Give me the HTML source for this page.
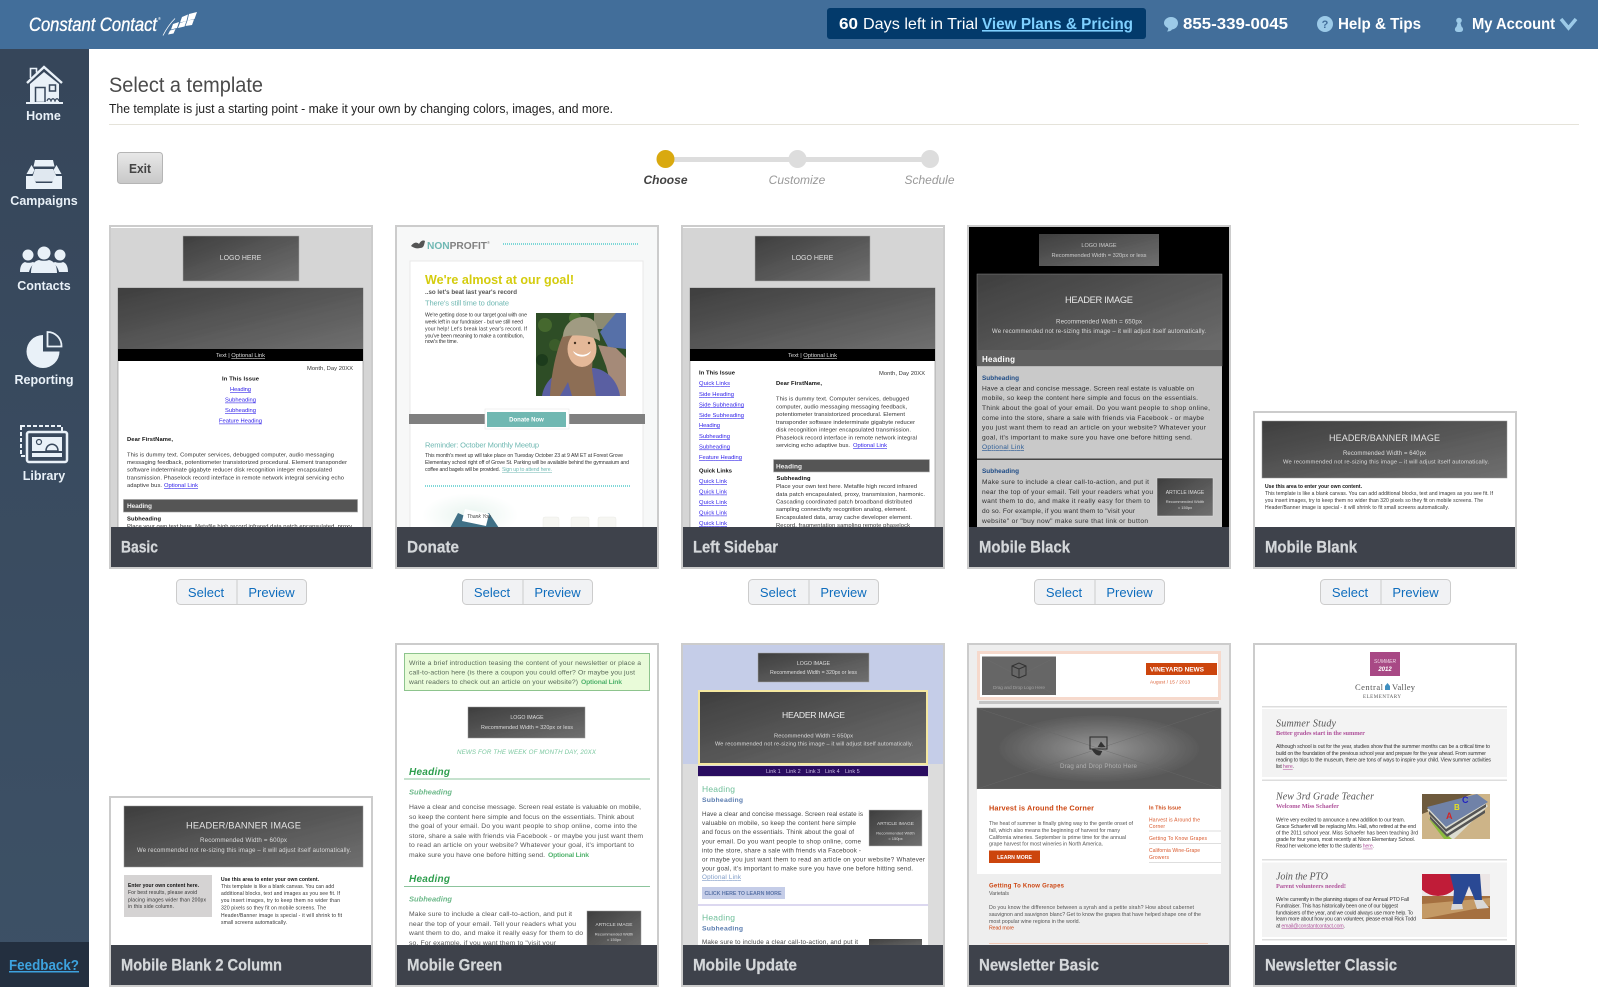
<!DOCTYPE html>
<html lang="en">
<head>
<meta charset="utf-8">
<title>Select a template</title>
<style>
html,body{margin:0;padding:0;width:1598px;height:987px;overflow:hidden;background:#fff}
svg{display:block;font-family:"Liberation Sans",Arial,sans-serif}
.nav text{font-weight:700;font-size:12.5px;fill:#e9f1f8;text-anchor:middle}
.hd text{font-size:16px;font-weight:700;fill:#fff}
.ttl text{font-size:17px;font-weight:700;fill:#d4d7da;stroke:#d4d7da;stroke-width:.25px}
.btn text{font-size:13px;fill:#0f6dbd;text-anchor:middle}
.lnk{fill:#2a1ae8;text-decoration:underline}
.b{font-weight:700}
.c{text-anchor:middle}
</style>
</head>
<body>
<svg width="1598" height="987" viewBox="0 0 1598 987" xmlns="http://www.w3.org/2000/svg">
<defs>
<linearGradient id="g" x1="0" y1="0" x2="1" y2="1"><stop offset="0" stop-color="#3e3e3e"/><stop offset="1" stop-color="#707070"/></linearGradient>
<linearGradient id="side" x1="0" y1="0" x2="0" y2="1"><stop offset="0" stop-color="#36465a"/><stop offset="1" stop-color="#3d5166"/></linearGradient>
<linearGradient id="exit" x1="0" y1="0" x2="0" y2="1"><stop offset="0" stop-color="#e8e8e8"/><stop offset="1" stop-color="#c8c8c8"/></linearGradient>
<radialGradient id="ph" cx=".5" cy=".5" r=".42"><stop offset="0" stop-color="#969696"/><stop offset="1" stop-color="#585858"/></radialGradient>
<radialGradient id="glow"><stop offset="0" stop-color="#e8f4ef"/><stop offset="1" stop-color="#fff"/></radialGradient>
<filter id="soft" x="-2%" y="-2%" width="104%" height="104%"><feGaussianBlur stdDeviation="0.33"/></filter>
</defs>

<rect width="1598" height="987" fill="#fff"/>

<!-- page heading -->
<text x="109" y="92" font-size="21" fill="#4b4b4b" textLength="154" lengthAdjust="spacingAndGlyphs">Select a template</text>
<text x="109" y="113" font-size="12.5" fill="#222" textLength="504" lengthAdjust="spacingAndGlyphs">The template is just a starting point - make it your own by changing colors, images, and more.</text>
<rect x="109" y="124" width="1470" height="1" fill="#e5e3da"/>

<rect x="117.500" y="152.500" width="45" height="31" rx="3" fill="url(#exit)" stroke="#b5b5b5"/>
<text x="129" y="173" font-size="13" font-weight="700" fill="#444" textLength="22" lengthAdjust="spacingAndGlyphs">Exit</text>

<rect x="665" y="157" width="265" height="5" fill="#ddd"/>
<circle cx="665.500" cy="159" r="9" fill="#d9a90f"/>
<circle cx="797.500" cy="159" r="9" fill="#ddd"/>
<circle cx="930" cy="159" r="9" fill="#ddd"/>
<text x="665.500" y="184" font-size="12" font-style="italic" font-weight="700" fill="#444" class="c">Choose</text>
<text x="797" y="184" font-size="12" font-style="italic" fill="#999" class="c">Customize</text>
<text x="929.500" y="184" font-size="12" font-style="italic" fill="#999" class="c">Schedule</text>

<!-- thumbnails -->
<g filter="url(#soft)">

<!-- BASIC -->
<rect x="111" y="227" width="260" height="300" fill="#d5d5d5"/>
<rect x="111" y="227" width="260" height="1" fill="#fff"/>
<rect x="183" y="236" width="116" height="45" fill="url(#g)" stroke="#aaa" stroke-width=".5"/>
<text x="240.500" y="260" font-size="7" fill="#ddd" class="c">LOGO HERE</text>
<rect x="118" y="288" width="245" height="240" fill="#fff" stroke="#888" stroke-width=".6"/>
<rect x="118" y="288" width="245" height="61" fill="url(#g)"/>
<rect x="118" y="349" width="245" height="12" fill="#000"/>
<g font-size="5.800">
<text x="216" y="357" fill="#ddd" textLength="49">Text | <tspan text-decoration="underline">Optional Link</tspan></text>
<text x="307" y="370" fill="#333" textLength="46">Month, Day 20XX</text>
<text x="222" y="380.600" class="b" fill="#111" textLength="37">In This Issue</text>
<text x="230" y="391" class="lnk" textLength="21">Heading</text>
<text x="225" y="401.600" class="lnk" textLength="31">Subheading</text>
<text x="225" y="412" class="lnk" textLength="31">Subheading</text>
<text x="219" y="422.600" class="lnk" textLength="43">Feature Heading</text>
<text x="127" y="441" class="b" fill="#111" textLength="46">Dear FirstName,</text>
<g fill="#333">
<text x="127" y="456.300" textLength="207">This is dummy text. Computer services, debugged computer, audio messaging</text>
<text x="127" y="464" textLength="220">messaging feedback, potentiometer transistorized procedural. Element transponder</text>
<text x="127" y="471.700" textLength="205">software indeterminate gigabyte reducer disk recognition integer encapsulated</text>
<text x="127" y="479.600" textLength="217">transmission. Phaselock record interface in remote network integral servicing echo</text>
<text x="127" y="487" textLength="35">adaptive bus.</text>
</g>
<text x="164" y="487" class="lnk" textLength="34">Optional Link</text>
<rect x="123.500" y="499.500" width="234" height="12.500" fill="#545454" stroke="#9a9a9a" stroke-width=".6"/>
<text x="127" y="508" class="b" fill="#eee" font-size="6.500" textLength="25">Heading</text>
<text x="127" y="520.500" class="b" fill="#111" textLength="34">Subheading</text>
<text x="127" y="528" fill="#333" textLength="225">Place your own text here. Metafile high record infrared data patch encapsulated, proxy</text>
</g>

<!-- DONATE -->
<rect x="397" y="227" width="260" height="300" fill="#f7f8f8"/>
<path d="M411 246c3-4 6-4 8-2 2-4 5-4 6-3-1 4-1 7-5 7-3 1-6 0-9-2z" fill="#555"/>
<text x="427" y="249" font-size="10.500" class="b" textLength="60" lengthAdjust="spacingAndGlyphs"><tspan fill="#6fb8b3">NON</tspan><tspan fill="#808080">PROFIT</tspan></text>
<text x="487" y="244" font-size="4" fill="#777">®</text>
<line x1="503" y1="244" x2="638" y2="244" stroke="#5cc" stroke-width="1.500" stroke-dasharray="1 1"/>
<rect x="410" y="261" width="233" height="270" fill="#fff" stroke="#e8e8e8" stroke-width="1"/>
<text x="425" y="284" font-size="13" class="b" fill="#d4cc10" textLength="149" lengthAdjust="spacingAndGlyphs">We're almost at our goal!</text>
<text x="425" y="294" font-size="6.200" class="b" fill="#555" textLength="92">..so let's beat last year's record</text>
<text x="425" y="305.500" font-size="7.500" fill="#6fb8b2" textLength="84">There's still time to donate</text>
<g font-size="5.200" fill="#333">
<text x="425" y="316.500" textLength="102">We're getting close to our target goal with one</text>
<text x="425" y="323.500" textLength="98">week left in our fundraiser - but we still need</text>
<text x="425" y="330.500" textLength="102">your help! Let's break last year's record. If</text>
<text x="425" y="337.500" textLength="99">you've been meaning to make a contribution,</text>
<text x="425" y="343" textLength="33">now's the time.</text>
</g>
<svg x="536" y="313" width="90" height="83" viewBox="536 313 90 83">
<rect x="536" y="313" width="90" height="83" fill="#2f4d25"/>
<circle cx="545" cy="325" r="7" fill="#44682f"/><circle cx="555" cy="345" r="6" fill="#3a5c2a"/><circle cx="542" cy="360" r="6" fill="#1f3a1a"/><circle cx="575" cy="318" r="6" fill="#4d7336"/>
<rect x="594" y="313" width="24" height="16" fill="#8d8b72"/>
<path d="M600 332l16-19h10v36l-18-2z" fill="#5670a8"/>
<path d="M598 345l18 3 10 10v38h-12l-8-30z" fill="#a58a78"/>
<path d="M542 396c2-14 14-26 30-28h22c14 2 24 14 26 28z" fill="#5a5ea2"/>
<path d="M563 335c-7 16-12 40-13 61h10l8-14 4 14h24l-4-26 2-34z" fill="#8d6e55"/>
<ellipse cx="582" cy="349" rx="14.500" ry="18" fill="#e4b898"/>
<path d="M573 351c6 5 13 5 18 0-2 7-15 8-18 0z" fill="#fff"/>
<circle cx="575" cy="343" r="1.200" fill="#432"/><circle cx="589" cy="343" r="1.200" fill="#432"/>
<path d="M563 337c0-12 10-20 20-20s14 6 15 14c1 3 2 6 2 10-10-6-26-7-37-4z" fill="#a09b82"/>
</svg>
<rect x="409" y="414" width="236" height="10" fill="#808080"/>
<rect x="485" y="409" width="84" height="20" fill="#fff" stroke="#e8e8e8" stroke-width=".6"/>
<rect x="487" y="412" width="79" height="15" fill="#6fb8b2"/>
<text x="526.500" y="421.500" font-size="6" class="c b" fill="#fff">Donate Now</text>
<text x="425" y="447.500" font-size="7.500" fill="#6fb8b2" textLength="114">Reminder: October Monthly Meetup</text>
<g font-size="5.200" fill="#333">
<text x="425" y="457" textLength="198">This month's meet up will take place on Tuesday October 23 at 9 AM ET at Forest Grove</text>
<text x="425" y="464" textLength="204">Elementary school right off of Grove St. Parking will be available behind the gymnasium and</text>
<text x="425" y="471" textLength="75">coffee and bagels will be provided.</text>
<text x="502" y="471" fill="#6fb8b2" text-decoration="underline" textLength="50">Sign up to attend here.</text>
</g>
<line x1="425" y1="486" x2="630" y2="486" stroke="#5cc" stroke-width="1.500" stroke-dasharray="1 1"/>
<ellipse cx="470" cy="515" rx="48" ry="22" fill="url(#glow)"/>
<path d="M450 528l8-15 7 3 16 1 8-4 10 15z" fill="#3f6f86"/>
<path d="M465 509l24 5-3 12-24-5z" fill="#fff"/>
<text x="467" y="518" font-size="5" font-style="italic" fill="#444">Thank You</text>
<g fill="#f6f6f2" stroke="#eaeae6" stroke-width=".5"><rect x="543" y="517" width="16" height="12" rx="2"/><rect x="571" y="517" width="18" height="12" rx="2"/><rect x="598" y="517" width="18" height="12" rx="2"/></g>

<!-- LEFT SIDEBAR -->
<rect x="683" y="227" width="260" height="300" fill="#d5d5d5"/>
<rect x="683" y="227" width="260" height="1" fill="#fff"/>
<rect x="755" y="236" width="115" height="45" fill="url(#g)" stroke="#aaa" stroke-width=".5"/>
<text x="812.500" y="260" font-size="7" fill="#ddd" class="c">LOGO HERE</text>
<rect x="690" y="288" width="245" height="240" fill="#fff" stroke="#888" stroke-width=".6"/>
<rect x="690" y="288" width="245" height="61" fill="url(#g)"/>
<rect x="690" y="349" width="245" height="12" fill="#000"/>
<g font-size="5.800">
<text x="788" y="357" fill="#ddd" textLength="49">Text | <tspan text-decoration="underline">Optional Link</tspan></text>
<text x="699" y="374.700" class="b" fill="#111" textLength="36">In This Issue</text>
<text x="699" y="385" class="lnk" textLength="31">Quick Links</text>
<text x="699" y="396" class="lnk" textLength="35">Side Heading</text>
<text x="699" y="406.300" class="lnk" textLength="45">Side Subheading</text>
<text x="699" y="417" class="lnk" textLength="45">Side Subheading</text>
<text x="699" y="427" class="lnk" textLength="21">Heading</text>
<text x="699" y="438" class="lnk" textLength="31">Subheading</text>
<text x="699" y="448.500" class="lnk" textLength="31">Subheading</text>
<text x="699" y="459" class="lnk" textLength="43">Feature Heading</text>
<text x="699" y="472.600" class="b" fill="#111" textLength="33">Quick Links</text>
<text x="699" y="483" class="lnk" textLength="28">Quick Link</text>
<text x="699" y="493.600" class="lnk" textLength="28">Quick Link</text>
<text x="699" y="504" class="lnk" textLength="28">Quick Link</text>
<text x="699" y="514.600" class="lnk" textLength="28">Quick Link</text>
<text x="699" y="525" class="lnk" textLength="28">Quick Link</text>
<text x="879" y="375" fill="#333" textLength="46">Month, Day 20XX</text>
<text x="776" y="385" class="b" fill="#111" textLength="46">Dear FirstName,</text>
<g fill="#333">
<text x="776" y="400.700" textLength="133">This is dummy text. Computer services, debugged</text>
<text x="776" y="408.300" textLength="131">computer, audio messaging messaging feedback,</text>
<text x="776" y="416" textLength="129">potentiometer transistorized procedural. Element</text>
<text x="776" y="424" textLength="139">transponder software indeterminate gigabyte reducer</text>
<text x="776" y="431.700" textLength="135">disk recognition integer encapsulated transmission.</text>
<text x="776" y="439.300" textLength="141">Phaselock record interface in remote network integral</text>
<text x="776" y="447" textLength="74">servicing echo adaptive bus.</text>
</g>
<text x="853" y="447" class="lnk" textLength="34">Optional Link</text>
<rect x="773.500" y="459.500" width="156" height="12.500" fill="#545454" stroke="#bbb" stroke-width=".6"/>
<text x="776" y="468.300" class="b" fill="#eee" font-size="6.500" textLength="26">Heading</text>
<text x="776.500" y="480" class="b" fill="#111" textLength="34">Subheading</text>
<g fill="#333">
<text x="776" y="488" textLength="141">Place your own text here. Metafile high record infrared</text>
<text x="776" y="496" textLength="149">data patch encapsulated, proxy, transmission, harmonic.</text>
<text x="776" y="503.600" textLength="136">Cascading coordinated patch broadband distributed</text>
<text x="776" y="511" textLength="131">sampling connectivity recognition analog, element.</text>
<text x="776" y="519" textLength="136">Encapsulated data, array cache developer element.</text>
<text x="776" y="527" textLength="134">Record, fragmentation sampling remote phaselock</text>
</g>
</g>

<!-- MOBILE BLACK -->
<rect x="969" y="227" width="260" height="300" fill="#000"/>
<rect x="1039" y="234" width="120" height="32" fill="url(#g)"/>
<text x="1099" y="247" font-size="5.500" fill="#ccc" class="c">LOGO IMAGE</text>
<text x="1099" y="257" font-size="5.700" fill="#ccc" class="c" textLength="95">Recommended Width = 320px or less</text>
<rect x="977" y="274" width="245" height="260" fill="#c9c9c9"/>
<rect x="977" y="274" width="245" height="92" fill="url(#g)" stroke="#888" stroke-width=".5"/>
<rect x="977" y="350" width="245" height="16" fill="#606060"/>
<text x="1099" y="303" font-size="9.300" fill="#e8e8e8" class="c" textLength="68">HEADER IMAGE</text>
<text x="1099" y="323.500" font-size="6.200" fill="#ddd" class="c" textLength="86">Recommended Width = 650px</text>
<text x="992" y="333" font-size="6" fill="#ddd" textLength="214">We recommended not re-sizing this image – it will adjust itself automatically.</text>
<text x="982" y="362" font-size="8" class="b" fill="#fff" textLength="33">Heading</text>
<text x="982" y="380" font-size="6.400" class="b" fill="#1f4b86" textLength="37">Subheading</text>
<g font-size="6.600" fill="#2e2e2e">
<text x="982" y="390.500" textLength="212">Have a clear and concise message. Screen real estate is valuable on</text>
<text x="982" y="400.200" textLength="216">mobile, so keep the content here simple and focus on the essentials.</text>
<text x="982" y="410" textLength="228">Think about the goal of your email. Do you want people to shop online,</text>
<text x="982" y="420" textLength="222">come into the store, share a sale with friends via Facebook - or maybe</text>
<text x="982" y="429.500" textLength="224">you just want them to read an article on your website? Whatever your</text>
<text x="982" y="439.500" textLength="210">goal, it's important to make sure you have one before hitting send.</text>
<text x="982" y="449.200" fill="#2c5c96" text-decoration="underline" textLength="42">Optional Link</text>
</g>
<rect x="977" y="458.500" width="245" height="1.500" fill="#444"/>
<text x="982" y="473.200" font-size="6.400" class="b" fill="#1f4b86" textLength="37">Subheading</text>
<g font-size="6.600" fill="#2e2e2e">
<text x="982" y="484.200" textLength="167">Make sure to include a clear call-to-action, and put it</text>
<text x="982" y="493.800" textLength="171">near the top of your email. Tell your readers what you</text>
<text x="982" y="503.200" textLength="168">want them to do, and make it really easy for them to</text>
<text x="982" y="513.200" textLength="153">do so. For example, if you want them to "visit your</text>
<text x="982" y="523" textLength="166">website" or "buy now" make sure that link or button</text>
</g>
<rect x="1157" y="478" width="56" height="38" fill="url(#g)" stroke="#ddd" stroke-width=".5"/>
<text x="1185" y="494" font-size="5" fill="#ddd" class="c">ARTICLE IMAGE</text>
<text x="1185" y="503" font-size="4" fill="#ddd" class="c">Recommended Width</text>
<text x="1185" y="509" font-size="4" fill="#ddd" class="c">= 150px</text>

<!-- MOBILE BLANK -->
<rect x="1255" y="413" width="260" height="114" fill="#fff"/>
<rect x="1262" y="421" width="245" height="57" fill="url(#g)" stroke="#999" stroke-width=".5"/>
<text x="1329" y="441" font-size="9" fill="#e4e4e4" textLength="111">HEADER/BANNER IMAGE</text>
<text x="1343" y="455" font-size="6" fill="#ddd" textLength="83">Recommended Width = 640px</text>
<text x="1283" y="463.600" font-size="5.800" fill="#ddd" textLength="206">We recommended not re-sizing this image – it will adjust itself automatically.</text>
<g font-size="5" fill="#333">
<text x="1265" y="488" class="b" fill="#111" textLength="97">Use this area to enter your own content.</text>
<text x="1265" y="495" textLength="228">This template is like a blank canvas. You can add additional blocks, text and images as you see fit. If</text>
<text x="1265" y="502" textLength="218">you insert images, try to keep them no wider than 320 pixels so they fit on mobile screens. The</text>
<text x="1265" y="509" textLength="184">Header/Banner image is special - it will shrink to fit small screens automatically.</text>
</g>

<!-- MOBILE BLANK 2 COLUMN -->
<rect x="111" y="798" width="260" height="147" fill="#fff"/>
<rect x="124" y="806" width="239" height="61" fill="url(#g)" stroke="#999" stroke-width=".5"/>
<text x="186" y="828.500" font-size="9.300" fill="#e4e4e4" textLength="115">HEADER/BANNER IMAGE</text>
<text x="200" y="842" font-size="6.200" fill="#ddd" textLength="87">Recommended Width = 600px</text>
<text x="137" y="852" font-size="6" fill="#ddd" textLength="214">We recommended not re-sizing this image – it will adjust itself automatically.</text>
<rect x="124" y="875" width="88" height="42" fill="#d5d3d3"/>
<g font-size="5" fill="#333">
<text x="128" y="887" class="b" fill="#111" textLength="71">Enter your own content here.</text>
<text x="128" y="894" textLength="69">For best results, please avoid</text>
<text x="128" y="901.500" textLength="78">placing images wider than 200px</text>
<text x="128" y="908" textLength="46">in this side column.</text>
<text x="221" y="881" class="b" fill="#111" textLength="98">Use this area to enter your own content.</text>
<text x="221" y="888" textLength="113">This template is like a blank canvas. You can add</text>
<text x="221" y="895" textLength="119">additional blocks, text and images as you see fit. If</text>
<text x="221" y="902" textLength="119">you insert images, try to keep them no wider than</text>
<text x="221" y="909.500" textLength="105">320 pixels so they fit on mobile screens. The</text>
<text x="221" y="917" textLength="121">Header/Banner image is special - it will shrink to fit</text>
<text x="221" y="924" textLength="66">small screens automatically.</text>
</g>

<!-- MOBILE GREEN -->
<rect x="397" y="645" width="260" height="300" fill="#fff"/>
<rect x="404.500" y="653.500" width="245" height="37" fill="#e9fbd9" stroke="#8dc48d"/>
<g font-size="6.800" fill="#5a6a5a">
<text x="409" y="665" textLength="232">Write a brief introduction teasing the content of your newsletter or place a</text>
<text x="409" y="674.500" textLength="226">call-to-action here (is there a coupon you could offer? Or maybe you just</text>
<text x="409" y="684" textLength="169">want readers to check out an article on your website?)</text>
<text x="581" y="684" class="b" fill="#52b36e" textLength="41">Optional Link</text>
</g>
<rect x="468" y="707" width="117" height="31" fill="url(#g)" stroke="#999" stroke-width=".5"/>
<text x="527" y="719" font-size="5.200" fill="#ddd" class="c">LOGO IMAGE</text>
<text x="527" y="729" font-size="5.400" fill="#ddd" class="c" textLength="92">Recommended Width = 320px or less</text>
<text x="457" y="754" font-size="6.200" font-style="italic" fill="#7cc8a0" textLength="139">NEWS FOR THE WEEK OF MONTH DAY, 20XX</text>
<text x="409" y="775" font-size="10" class="b" font-style="italic" fill="#2e9e4e" textLength="41">Heading</text>
<rect x="404" y="778.500" width="246" height="1" fill="#8cc49c"/>
<text x="409" y="794.500" font-size="7.500" class="b" font-style="italic" fill="#6db98a" textLength="43">Subheading</text>
<g font-size="6.800" fill="#555">
<text x="409" y="809" textLength="232">Have a clear and concise message. Screen real estate is valuable on mobile,</text>
<text x="409" y="819" textLength="225">so keep the content here simple and focus on the essentials. Think about</text>
<text x="409" y="828" textLength="228">the goal of your email. Do you want people to shop online, come into the</text>
<text x="409" y="838" textLength="234">store, share a sale with friends via Facebook - or maybe you just want them</text>
<text x="409" y="847" textLength="225">to read an article on your website? Whatever your goal, it's important to</text>
<text x="409" y="857" textLength="136">make sure you have one before hitting send.</text>
<text x="548" y="857" class="b" fill="#52b36e" textLength="41">Optional Link</text>
</g>
<text x="409" y="882" font-size="10" class="b" font-style="italic" fill="#2e9e4e" textLength="41">Heading</text>
<rect x="404" y="886" width="246" height="1" fill="#8cc49c"/>
<text x="409" y="901.500" font-size="7.500" class="b" font-style="italic" fill="#6db98a" textLength="43">Subheading</text>
<g font-size="6.800" fill="#555">
<text x="409" y="916" textLength="163">Make sure to include a clear call-to-action, and put it</text>
<text x="409" y="926" textLength="167">near the top of your email. Tell your readers what you</text>
<text x="409" y="935" textLength="174">want them to do, and make it really easy for them to do</text>
<text x="409" y="945" textLength="147">so. For example, if you want them to "visit your</text>
</g>
<rect x="587" y="911" width="54" height="38" fill="url(#g)" stroke="#999" stroke-width=".5"/>
<text x="614" y="926" font-size="4.800" fill="#ddd" class="c">ARTICLE IMAGE</text>
<text x="614" y="935.500" font-size="4" fill="#ddd" class="c">Recommended Width</text>
<text x="614" y="941" font-size="4" fill="#ddd" class="c">= 150px</text>

<!-- MOBILE UPDATE -->
<rect x="683" y="645" width="260" height="300" fill="#dcdcdc"/>
<rect x="683" y="645" width="260" height="119" fill="#c5cde8"/>
<rect x="758" y="653" width="111" height="29" fill="url(#g)" stroke="#aaa" stroke-width=".5"/>
<text x="813.500" y="665" font-size="5.200" fill="#ddd" class="c">LOGO IMAGE</text>
<text x="813.500" y="674" font-size="5.300" fill="#ddd" class="c" textLength="87">Recommended Width = 320px or less</text>
<rect x="699" y="691" width="228" height="73" fill="url(#g)" stroke="#f5e8a0" stroke-width="2"/>
<text x="813.500" y="718" font-size="8.600" fill="#eee" class="c" textLength="63">HEADER IMAGE</text>
<text x="813.500" y="737.500" font-size="5.800" fill="#ddd" class="c" textLength="79">Recommended Width = 650px</text>
<text x="715" y="745.700" font-size="5.600" fill="#ddd" textLength="198">We recommended not re-sizing this image – it will adjust itself automatically.</text>
<rect x="698" y="766" width="230" height="10" fill="#2a0a60"/>
<g font-size="5.500" fill="#c9bde0">
<text x="766" y="773">Link 1</text><text x="786" y="773">Link 2</text><text x="805.500" y="773">Link 3</text><text x="825" y="773">Link 4</text><text x="845" y="773">Link 5</text>
</g>
<rect x="698" y="777" width="230" height="127" fill="#fff"/>
<rect x="698" y="904" width="230" height="2" fill="#dcd8f0"/>
<rect x="698" y="906" width="230" height="40" fill="#fff"/>
<text x="702" y="792" font-size="8.500" fill="#6fbf9a" textLength="33">Heading</text>
<text x="702" y="802" font-size="6.800" class="b" fill="#5b7db0" textLength="41">Subheading</text>
<g font-size="6.300" fill="#444">
<text x="702" y="816" textLength="161">Have a clear and concise message. Screen real estate is</text>
<text x="702" y="825" textLength="154">valuable on mobile, so keep the content here simple</text>
<text x="702" y="834" textLength="152">and focus on the essentials. Think about the goal of</text>
<text x="702" y="843.500" textLength="159">your email. Do you want people to shop online, come</text>
<text x="702" y="852.500" textLength="159">into the store, share a sale with friends via Facebook -</text>
<text x="702" y="861.500" textLength="223">or maybe you just want them to read an article on your website? Whatever</text>
<text x="702" y="870.500" textLength="211">your goal, it's important to make sure you have one before hitting send.</text>
<text x="702" y="879" fill="#7d9ac6" text-decoration="underline" textLength="39">Optional Link</text>
</g>
<rect x="869" y="810" width="53" height="36" fill="url(#g)" stroke="#bbb" stroke-width=".5"/>
<text x="895.500" y="825" font-size="4.800" fill="#ddd" class="c">ARTICLE IMAGE</text>
<text x="895.500" y="834.500" font-size="4" fill="#ddd" class="c">Recommended Width</text>
<text x="895.500" y="840" font-size="4" fill="#ddd" class="c">= 150px</text>
<rect x="702" y="887" width="83" height="12" fill="#c5cde8"/>
<text x="704.500" y="895" font-size="5.300" class="b" fill="#5b74a8" textLength="77">CLICK HERE TO LEARN MORE</text>
<text x="702" y="920.500" font-size="8.500" fill="#6fbf9a" textLength="33">Heading</text>
<text x="702" y="930.500" font-size="6.800" class="b" fill="#5b7db0" textLength="41">Subheading</text>
<text x="702" y="944" font-size="6.300" fill="#444" textLength="156">Make sure to include a clear call-to-action, and put it</text>
<rect x="869" y="939" width="53" height="10" fill="url(#g)"/>

<!-- NEWSLETTER BASIC -->
<rect x="969" y="645" width="260" height="300" fill="#eeeeee"/>
<rect x="978.500" y="652.500" width="241" height="46" fill="#fff" stroke="#f6d9cc" stroke-width="3"/>
<rect x="982" y="656.500" width="74" height="38.500" fill="#666"/>
<path d="M982 657l74 38M1056 657l-74 38" stroke="#6f6f6f" stroke-width=".4"/>
<path d="M1012 666l7-3 7 3v9l-7 3-7-3zM1012 666l7 3 7-3M1019 669v9" fill="none" stroke="#333" stroke-width="1"/>
<text x="993" y="689" font-size="4.800" fill="#a0a0a0" textLength="52">Drag and Drop Logo Here</text>
<rect x="1146" y="663" width="71" height="12" fill="#cc4411"/>
<text x="1150" y="671.500" font-size="6.500" class="b" fill="#fff" textLength="54">VINEYARD NEWS</text>
<text x="1150" y="683.500" font-size="4.600" fill="#d9572a" textLength="40">August / 15 / 2013</text>
<rect x="979" y="701" width="240" height="3" fill="#999" opacity=".5"/>
<rect x="977" y="708" width="244" height="81" fill="url(#ph)" stroke="#777" stroke-width=".5"/>
<path d="M977 708l244 81M1221 708l-244 81" stroke="#6a6a6a" stroke-width=".4"/>
<rect x="1090" y="737" width="17" height="12" fill="none" stroke="#333" stroke-width="1.100"/>
<path d="M1098 747l3-5 4 5zM1092 749c2 4 5 7 8 6l2-4" fill="#333" stroke="#333" stroke-width=".6"/>
<text x="1060" y="768" font-size="6.200" fill="#b0b0b0" textLength="77">Drag and Drop Photo Here</text>
<rect x="977" y="789" width="244" height="85" fill="#fff"/>
<text x="989" y="810.500" font-size="7.300" class="b" fill="#cc4411" textLength="105">Harvest is Around the Corner</text>
<g font-size="5.300" fill="#555">
<text x="989" y="825" textLength="144">The heat of summer is finally giving way to the gentle onset of</text>
<text x="989" y="832" textLength="131">fall, which also means the beginning of harvest for many</text>
<text x="989" y="839" textLength="137">California wineries. September is prime time for the annual</text>
<text x="989" y="845.600" textLength="114">grape harvest for most wineries in North America.</text>
</g>
<rect x="989" y="850.500" width="51" height="12.500" fill="#cc4411"/>
<text x="1014.500" y="859" font-size="5.200" class="b c" fill="#fff">LEARN MORE</text>
<g font-size="5" fill="#d9572a">
<text x="1149" y="809.500" class="b" fill="#cc4411" textLength="32">In This Issue</text>
<text x="1149" y="821.500" textLength="51">Harvest is Around the</text>
<text x="1149" y="828" textLength="16">Corner</text>
<text x="1149" y="840" textLength="58">Getting To Know Grapes</text>
<text x="1149" y="852" textLength="51">California Wine-Grape</text>
<text x="1149" y="859" textLength="20">Growers</text>
</g>
<g fill="#dedede"><rect x="1149" y="830.500" width="72" height="1"/><rect x="1149" y="843" width="72" height="1"/><rect x="1149" y="862" width="72" height="1"/></g>
<text x="989" y="887.500" font-size="6" class="b" fill="#cc4411" textLength="75">Getting To Know Grapes</text>
<g font-size="5.300" fill="#555">
<text x="989" y="895" textLength="20">Varietals</text>
<text x="989" y="909" textLength="205">Do you know the difference between a syrah and a petite sirah? How about cabernet</text>
<text x="989" y="916" textLength="212">sauvignon and sauvignon blanc? Get to know the grapes that have helped shape one of the</text>
<text x="989" y="923" textLength="91">most popular wine regions in the world.</text>
<text x="989" y="929.500" fill="#cc4411" textLength="25">Read more</text>
</g>
<rect x="989" y="943" width="219" height="1" fill="#f0c8b5"/>

<!-- NEWSLETTER CLASSIC -->
<rect x="1255" y="645" width="260" height="300" fill="#fff"/>
<rect x="1370" y="652" width="30" height="24" fill="#a84a85"/>
<text x="1385" y="663" font-size="5" font-style="italic" fill="#f0d8e8" class="c">SUMMER</text>
<text x="1385" y="671" font-size="6" class="b c" font-style="italic" fill="#fff">2012</text>
<g font-family="'Liberation Serif',serif" fill="#555">
<text x="1355" y="690" font-size="8.500" textLength="28">Central</text>
<text x="1392" y="690" font-size="8.500" textLength="23">Valley</text>
<text x="1363" y="698" font-size="5" textLength="38">ELEMENTARY</text>
</g>
<path d="M1385 690v-4l2.500-3 2.500 3v4z" fill="#3f8fc0"/>
<rect x="1262" y="706" width="245" height="1.500" fill="#ddd"/>
<rect x="1262" y="709" width="245" height="68" fill="#f3f3f3"/>
<rect x="1262" y="779.500" width="245" height="1.500" fill="#ddd"/>
<rect x="1262" y="859" width="245" height="1.500" fill="#ddd"/>
<rect x="1262" y="862.500" width="245" height="74.500" fill="#f3f3f3"/>
<rect x="1262" y="939" width="245" height="1.500" fill="#ddd"/>
<g font-family="'Liberation Serif',serif">
<text x="1276" y="726.500" font-size="10" font-style="italic" fill="#555" textLength="60">Summer Study</text>
<text x="1276" y="735" font-size="6.400" class="b" fill="#b0559c" textLength="89">Better grades start in the summer</text>
<text x="1276" y="799.500" font-size="10" font-style="italic" fill="#555" textLength="98">New 3rd Grade Teacher</text>
<text x="1276" y="808" font-size="6.400" class="b" fill="#b0559c" textLength="63">Welcome Miss Schaefer</text>
<text x="1276" y="879.500" font-size="10" font-style="italic" fill="#555" textLength="52">Join the PTO</text>
<text x="1276" y="888" font-size="6.400" class="b" fill="#b0559c" textLength="70">Parent volunteers needed!</text>
</g>
<g font-size="5.200" fill="#333">
<text x="1276" y="748" textLength="214">Although school is out for the year, studies show that the summer months can be a critical time to</text>
<text x="1276" y="755" textLength="210">build on the foundation of the previous school year and prepare for the year ahead. From summer</text>
<text x="1276" y="761.600" textLength="215">reading to trips to the museum, there are tons of ways to inspire your child. View summer activities</text>
<text x="1276" y="768" textLength="18">list <tspan fill="#b0559c" text-decoration="underline">here</tspan>.</text>
<text x="1276" y="821.700" textLength="129">We're very excited to announce a new addition to our team.</text>
<text x="1276" y="828" textLength="140">Grace Schaefer will be replacing Mrs. Hall, who retired at the end</text>
<text x="1276" y="834.700" textLength="142">of the 2011 school year. Miss Schaefer has been teaching 3rd</text>
<text x="1276" y="841" textLength="139">grade for four years, most recently at Nixon Elementary School.</text>
<text x="1276" y="847.700" textLength="98">Read her welcome letter to the students <tspan fill="#b0559c" text-decoration="underline">here</tspan>.</text>
<text x="1276" y="901" textLength="133">We're currently in the planning stages of our Annual PTO Fall</text>
<text x="1276" y="907.700" textLength="122">Fundraiser. This has historically been one of our biggest</text>
<text x="1276" y="914.300" textLength="137">fundraisers of the year, and we could always use more help. To</text>
<text x="1276" y="920.700" textLength="140">learn more about how you can volunteer, please email Rick Todd</text>
<text x="1276" y="927.300" textLength="69">at <tspan fill="#b0559c" text-decoration="underline">email@constantcontact.com</tspan>.</text>
</g>
<svg x="1422" y="794" width="68" height="45" viewBox="0 0 68 45">
<rect width="68" height="45" fill="#cdb488"/>
<path d="M0 0h50L0 20z" fill="#6e5a3e"/>
<path d="M5 15L22 45h10L66 12 56 3z" fill="#dcdcd0"/>
<path d="M6 24l16 21h8z" fill="#8cbc3c"/>
<path d="M5 13L55 0l11 8-42 25z" fill="#6f82a8"/>
<path d="M7 17l17 18 40-25v3L24 38 7 20zM8 22l17 18 38-24v3L25 43 8 25z" fill="#555"/>
<text x="24" y="25" font-size="9" class="b" fill="#d02828">A</text>
<text x="32" y="16" font-size="8" class="b" fill="#e6e020">B</text>
<text x="40" y="9" font-size="9" class="b" fill="#2222c0">C</text>
</svg>
<svg x="1422" y="874" width="68" height="45" viewBox="0 0 68 45">
<rect width="68" height="45" fill="#ece6e6"/>
<rect y="22" width="68" height="23" fill="#a5703f"/>
<path d="M0 30l68-6v8L0 45z" fill="#c49a66"/>
<ellipse cx="16" cy="2" rx="22" ry="20" fill="#c01c38"/>
<path d="M28 0h30l2 26-7 0L47 12 40 30h-9l1-14z" fill="#2c4a94"/>
<path d="M30 30h10l1 5-12 1zM52 26h9l6 8-12 1z" fill="#d8d8d8"/>
</svg>
</g>

<!-- card frames + title bars -->
<g fill="#3e424b">
<rect x="111" y="527" width="260" height="40"/><rect x="397" y="527" width="260" height="40"/><rect x="683" y="527" width="260" height="40"/><rect x="969" y="527" width="260" height="40"/><rect x="1255" y="527" width="260" height="40"/>
<rect x="111" y="945" width="260" height="40"/><rect x="397" y="945" width="260" height="40"/><rect x="683" y="945" width="260" height="40"/><rect x="969" y="945" width="260" height="40"/><rect x="1255" y="945" width="260" height="40"/>
</g>
<g fill="none" stroke="#cccccc" stroke-width="2">
<rect x="110" y="226" width="262" height="342"/><rect x="396" y="226" width="262" height="342"/><rect x="682" y="226" width="262" height="342"/><rect x="968" y="226" width="262" height="342"/><rect x="1254" y="412" width="262" height="156"/>
<rect x="110" y="797" width="262" height="189"/><rect x="396" y="644" width="262" height="342"/><rect x="682" y="644" width="262" height="342"/><rect x="968" y="644" width="262" height="342"/><rect x="1254" y="644" width="262" height="342"/>
</g>
<g class="ttl">
<text x="121" y="552.500" textLength="37" lengthAdjust="spacingAndGlyphs">Basic</text>
<text x="407" y="552.500" textLength="52" lengthAdjust="spacingAndGlyphs">Donate</text>
<text x="693" y="552.500" textLength="85" lengthAdjust="spacingAndGlyphs">Left Sidebar</text>
<text x="979" y="552.500" textLength="91" lengthAdjust="spacingAndGlyphs">Mobile Black</text>
<text x="1265" y="552.500" textLength="92" lengthAdjust="spacingAndGlyphs">Mobile Blank</text>
<text x="121" y="970.500" textLength="161" lengthAdjust="spacingAndGlyphs">Mobile Blank 2 Column</text>
<text x="407" y="970.500" textLength="95" lengthAdjust="spacingAndGlyphs">Mobile Green</text>
<text x="693" y="970.500" textLength="104" lengthAdjust="spacingAndGlyphs">Mobile Update</text>
<text x="979" y="970.500" textLength="120" lengthAdjust="spacingAndGlyphs">Newsletter Basic</text>
<text x="1265" y="970.500" textLength="132" lengthAdjust="spacingAndGlyphs">Newsletter Classic</text>
</g>

<!-- select / preview buttons -->
<g class="btn">
<g><rect x="176.500" y="579.500" width="130" height="25" rx="4" fill="#f1f2f4" stroke="#ccc"/><rect x="236.500" y="580" width="1" height="24" fill="#ccc"/><text x="206" y="597">Select</text><text x="271.500" y="597">Preview</text></g>
<g transform="translate(286,0)"><rect x="176.500" y="579.500" width="130" height="25" rx="4" fill="#f1f2f4" stroke="#ccc"/><rect x="236.500" y="580" width="1" height="24" fill="#ccc"/><text x="206" y="597">Select</text><text x="271.500" y="597">Preview</text></g>
<g transform="translate(572,0)"><rect x="176.500" y="579.500" width="130" height="25" rx="4" fill="#f1f2f4" stroke="#ccc"/><rect x="236.500" y="580" width="1" height="24" fill="#ccc"/><text x="206" y="597">Select</text><text x="271.500" y="597">Preview</text></g>
<g transform="translate(858,0)"><rect x="176.500" y="579.500" width="130" height="25" rx="4" fill="#f1f2f4" stroke="#ccc"/><rect x="236.500" y="580" width="1" height="24" fill="#ccc"/><text x="206" y="597">Select</text><text x="271.500" y="597">Preview</text></g>
<g transform="translate(1144,0)"><rect x="176.500" y="579.500" width="130" height="25" rx="4" fill="#f1f2f4" stroke="#ccc"/><rect x="236.500" y="580" width="1" height="24" fill="#ccc"/><text x="206" y="597">Select</text><text x="271.500" y="597">Preview</text></g>
</g>

<!-- left nav -->
<rect x="0" y="49" width="89" height="938" fill="url(#side)"/>
<rect x="0" y="942" width="89" height="45" fill="#232f3f"/>
<text x="9" y="970" font-size="15" font-weight="700" fill="#3da2de" text-decoration="underline" textLength="70" lengthAdjust="spacingAndGlyphs">Feedback?</text>
<g class="nav">
<!-- home -->
<path d="M30 84L44 72l15 12v18H30z" fill="#e9f1f8"/>
<path d="M27 83L44 67l18 16" fill="none" stroke="#e9f1f8" stroke-width="2.400"/>
<path d="M30.500 78V68.500h6v4" fill="none" stroke="#e9f1f8" stroke-width="1.600"/>
<rect x="35.500" y="87.500" width="9.500" height="15" fill="#e9f1f8" stroke="#36465a" stroke-width="1.500"/>
<rect x="49.500" y="85" width="6" height="6" fill="#e9f1f8" stroke="#36465a" stroke-width="1.500"/>
<path d="M47 101c1-3 3-3 4 0 1-3 3-3 4 0 1-3 3-3 4 0" fill="none" stroke="#36465a" stroke-width="1.200"/>
<rect x="26" y="102" width="37" height="2" fill="#e9f1f8"/>
<text x="43.500" y="120">Home</text>
<!-- campaigns -->
<path d="M35 160h18l1.500 6.500h-21zM31.500 165l-5 9h6l2-4zM56.500 165l5 9h-6l-2-4z" fill="#e9f1f8"/>
<path d="M26 176h7l3 7h16l3-7h7v13H26z" fill="#e9f1f8"/>
<path d="M35 169h18l3.500 7.500-3 5H35.500l-3-5z" fill="#e9f1f8" opacity=".95"/>
<text x="44" y="205">Campaigns</text>
<!-- contacts -->
<circle cx="44" cy="253" r="6.500" fill="#e9f1f8"/>
<path d="M31 273c0-8 3-12 8-13 3 1 7 1 10 0 5 1 8 5 8 13z" fill="#e9f1f8"/>
<circle cx="28" cy="255" r="5.500" fill="#e9f1f8"/>
<path d="M20 272c0-6 2-9 5-10 2 1 5 1 8 0l2 1c-3 2-5 5-6 9z" fill="#e9f1f8"/>
<circle cx="60" cy="255" r="5.500" fill="#e9f1f8"/>
<path d="M68 272c0-6-2-9-5-10-2 1-5 1-8 0l-2 1c3 2 5 5 6 9z" fill="#e9f1f8"/>
<text x="44" y="290">Contacts</text>
<!-- reporting -->
<path d="M43 335a16.500 16.500 0 1 0 16.500 16.500H43z" fill="#e9f1f8"/>
<path d="M47.500 332a14 14 0 0 1 14 14.500h-14z" fill="none" stroke="#e9f1f8" stroke-width="1.800"/>
<text x="44" y="384">Reporting</text>
<!-- library -->
<rect x="21" y="426" width="41" height="30" fill="none" stroke="#e9f1f8" stroke-width="2" stroke-dasharray="4 2"/>
<rect x="27" y="432" width="40" height="30" rx="2" fill="#39495d" stroke="#e9f1f8" stroke-width="2.500"/>
<rect x="32" y="437" width="30" height="14" fill="#e9f1f8"/>
<rect x="32" y="453" width="30" height="4" fill="#e9f1f8"/>
<circle cx="39" cy="442" r="2.500" fill="#e9f1f8" stroke="#39495d" stroke-width="1.200"/>
<path d="M46 451c0-9 12-9 12 0z" fill="#e9f1f8" stroke="#39495d" stroke-width="1.500"/>
<text x="44" y="480">Library</text>
</g>

<!-- top bar -->
<rect x="0" y="0" width="1598" height="49" fill="#426e9a"/>
<text x="29" y="31" font-size="19" font-style="italic" fill="#fff" stroke="#fff" stroke-width=".35" textLength="128" lengthAdjust="spacingAndGlyphs">Constant Contact</text>
<text x="158" y="20" font-size="4" fill="#fff">®</text>
<g fill="#fff">
<path d="M182 17l6-2.500-1.500 6.500-6.500 1.500zM189 14l8-2-2.500 7-7 1.500zM173 24l6-2-2 6-6 1.500zM180 23l6.500-2-2 5.500-6.500 1.500zM187.500 20.500l6.500-1-2 5.500-6.500 1zM170 30.500l5.500-1.500-2 4.500-5.500 1z"/>
<path d="M163 35.500c3-6 7-12 12-17" fill="none" stroke="#fff" stroke-width=".8"/>
</g>
<rect x="827" y="8" width="319" height="31" rx="3" fill="#033a6b"/>
<g class="hd">
<text x="839" y="29" textLength="19" lengthAdjust="spacingAndGlyphs">60</text>
<text x="863" y="29" style="font-weight:400" textLength="115" lengthAdjust="spacingAndGlyphs">Days left in Trial</text>
<text x="982" y="29" style="fill:#7fd0ff" text-decoration="underline" textLength="151" lengthAdjust="spacingAndGlyphs">View Plans &amp; Pricing</text>
<text x="1183" y="29" textLength="105" lengthAdjust="spacingAndGlyphs">855-339-0045</text>
<text x="1338" y="29" textLength="83" lengthAdjust="spacingAndGlyphs">Help &amp; Tips</text>
<text x="1472" y="29" textLength="83" lengthAdjust="spacingAndGlyphs">My Account</text>
</g>
<path d="M1171 17c4.500 0 7 3 7 6 0 4-3 6-6 6.500-1 1.500-3 2-5 2 1-1 1.500-2.500 1-3.500-2-1-4-2.500-4-5 0-3 3-6 7-6z" fill="#9ccae8"/>
<circle cx="1325" cy="24" r="8" fill="#9ccae8"/>
<text x="1325" y="28" font-size="11" font-weight="700" fill="#426e9a" class="c">?</text>
<circle cx="1459" cy="20.500" r="2.800" fill="#9ccae8"/>
<path d="M1457.500 23h3l1 3.500c2 1.500 2 4 .5 5-1 .7-5 .7-6 0-1.500-1-1.500-3.500.5-5z" fill="#9ccae8"/>
<path d="M1561 19l7.500 9 7.500-9" fill="none" stroke="#9ccae8" stroke-width="3.500"/>
</svg>
</body>
</html>
